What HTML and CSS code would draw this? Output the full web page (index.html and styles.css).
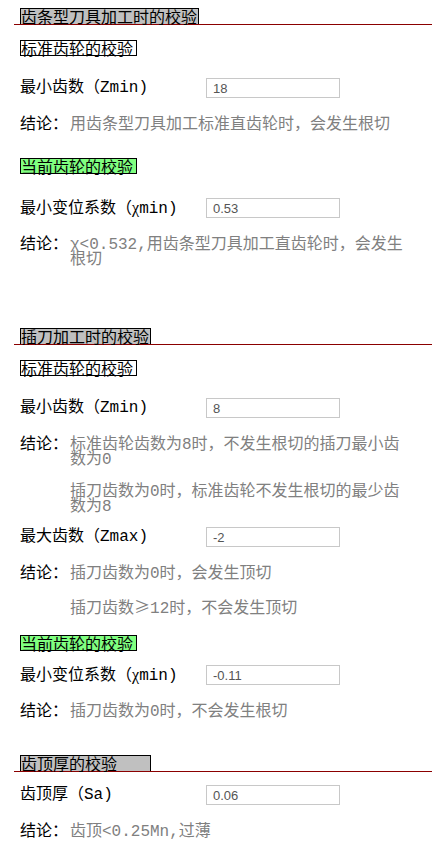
FILE: index.html
```html
<!DOCTYPE html>
<html lang="zh-CN">
<head>
    <meta charset="UTF-8">
    <title>根切与顶切校验</title>
    <link rel="stylesheet" href="styles.css">
</head>
<body>
<div class="page">

    <!-- 齿条型刀具 -->
    <h2 class="sec-title"><span>齿条型刀具加工时的校验</span></h2>
    <h3 class="sub std"><span>标准齿轮的校验</span></h3>
    <div class="row">
        <label>最小齿数（Zmin)</label>
        <input type="text" value="18">
    </div>
    <div class="result">
        <span class="k">结论：</span>
        <div class="v">
            <p>用齿条型刀具加工标准直齿轮时，会发生根切</p>
        </div>
    </div>
    <h3 class="sub cur gap-l"><span>当前齿轮的校验</span></h3>
    <div class="row wide-gap">
        <label>最小变位系数（<i class="chi">χ</i>min)</label>
        <input type="text" value="0.53">
    </div>
    <div class="result">
        <span class="k">结论：</span>
        <div class="v">
            <p>χ&lt;0.532,用齿条型刀具加工直齿轮时，会发生根切</p>
        </div>
    </div>

    <!-- 插刀 -->
    <h2 class="sec-title sec-gap"><span>插刀加工时的校验</span></h2>
    <h3 class="sub std"><span>标准齿轮的校验</span></h3>
    <div class="row">
        <label>最小齿数（Zmin)</label>
        <input type="text" value="8">
    </div>
    <div class="result">
        <span class="k">结论：</span>
        <div class="v">
            <p>标准齿轮齿数为8时，不发生根切的插刀最小齿数为0</p>
            <p>插刀齿数为0时，标准齿轮不发生根切的最少齿数为8</p>
        </div>
    </div>
    <div class="row tight">
        <label>最大齿数（Zmax)</label>
        <input type="text" value="-2">
    </div>
    <div class="result">
        <span class="k">结论：</span>
        <div class="v">
            <p>插刀齿数为0时，会发生顶切</p>
            <p>插刀齿数<span class="cjk">≥</span>12时，不会发生顶切</p>
        </div>
    </div>
    <h3 class="sub cur gap-s"><span>当前齿轮的校验</span></h3>
    <div class="row tight2">
        <label>最小变位系数（<i class="chi">χ</i>min)</label>
        <input type="text" value="-0.11">
    </div>
    <div class="result">
        <span class="k">结论：</span>
        <div class="v">
            <p>插刀齿数为0时，不会发生根切</p>
        </div>
    </div>

    <!-- 齿顶厚 -->
    <h2 class="sec-title sec-gap-s"><span class="wide">齿顶厚的校验</span></h2>
    <div class="row tight3">
        <label>齿顶厚（Sa)</label>
        <input type="text" value="0.06">
    </div>
    <div class="result">
        <span class="k">结论：</span>
        <div class="v">
            <p>齿顶&lt;0.25Mn,过薄</p>
        </div>
    </div>

</div>
</body>
</html>
```

FILE: styles.css
```css
*{
    padding: 0;
    margin: 0;
    box-sizing: border-box;
}
body{
    font-family: "Noto Sans CJK SC", "Liberation Sans", sans-serif;
    font-size: 16px;
    color: #000;
    background: #fff;
}
.page{
    width: 440px;
    padding: 8px 8px 0 14px;
}

/* 大标题：灰底 + 暗红下划线 */
.sec-title{
    font-size: 16px;
    font-weight: normal;
    line-height: 15px;
    border-bottom: 1px solid #8b0000;
    padding-left: 6px;
}
.sec-title span{
    display: inline-block;
    vertical-align: bottom;
    background-color: #c0c0c0;
    border: 1px solid #000;
    border-bottom: none;
    padding-right: 1px;
}
.sec-title .wide{
    width: 131px;
}
.sec-gap{
    margin-top: 60px;
}
.sec-gap-s{
    margin-top: 35px;
}

/* 小标题 */
.sub{
    font-size: 16px;
    font-weight: normal;
    line-height: 14px;
    margin-top: 15px;
    padding-left: 6px;
}
.sub span{
    display: inline-block;
    vertical-align: top;
    border: 1px solid #000;
    padding-right: 3px;
}
.sub.std span{
    background-color: #fff;
}
.sub.cur span{
    background-color: #80ff80;
}
.gap-l{
    margin-top: 25px;
}
.gap-s{
    margin-top: 18px;
}

/* 输入行 */
.row{
    display: flex;
    align-items: center;
    margin-top: 22px;
    padding-left: 6px;
    height: 20px;
}
.row.wide-gap{
    margin-top: 24px;
}
.row.tight{
    margin-top: 12px;
}
.row.tight2{
    margin-top: 14px;
}
.row.tight3{
    margin-top: 13px;
}
.row label{
    width: 186px;
    line-height: 20px;
    font-family: "Liberation Mono", "Noto Sans CJK SC", monospace;
}
.chi{
    font-style: normal;
    font-family: "Liberation Serif", serif;
}
.row input{
    width: 134px;
    height: 20px;
    border: 1px solid #c8c8c8;
    padding: 0 6px;
    font-family: "Liberation Sans", sans-serif;
    font-size: 13px;
    color: #555;
    outline: none;
}

/* 结论 */
.result{
    display: flex;
    margin-top: 20px;
    padding-left: 6px;
    line-height: 15px;
    font-family: "Liberation Mono", "Noto Sans CJK SC", monospace;
}
.result .k{
    width: 50px;
    flex: none;
}
.result .v{
    width: 336px;
    color: #808080;
}
.result p{
    margin-bottom: 17px;
}
.result p:last-child{
    margin-bottom: 0;
}
.cjk{
    font-family: "Noto Sans CJK SC", sans-serif;
}
```
